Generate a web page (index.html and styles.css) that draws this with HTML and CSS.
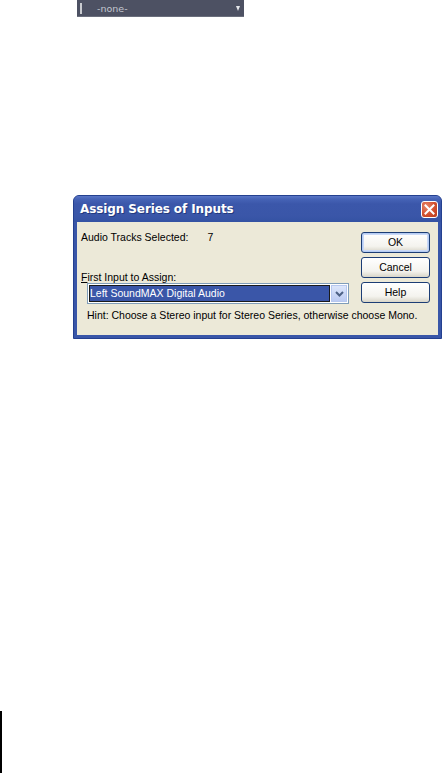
FILE: index.html
```html
<!DOCTYPE html>
<html>
<head>
<meta charset="utf-8">
<link rel="stylesheet" href="styles.css">
</head>
<body>
<div class="page">
  <div class="chan">
    <span class="grip"></span>
    <span class="chan-label">-none-</span>
    <span class="chan-arrow"></span>
  </div>

  <div class="dialog">
    <div class="titlebar">
      <span class="title">Assign Series of Inputs</span>
      <span class="close">
        <svg width="11" height="11" viewBox="0 0 11 11"><path d="M1.5 1.5 L9.5 9.5 M9.5 1.5 L1.5 9.5" stroke="#fff" stroke-width="2" stroke-linecap="square"/></svg>
      </span>
    </div>
    <div class="body">
      <div class="upper">
        <div class="main">
          <div class="tracks"><span>Audio Tracks Selected:</span><span class="count">7</span></div>
          <div class="lbl"><u>F</u>irst Input to Assign:</div>
          <div class="select">
            <span class="sel-text">Left SoundMAX Digital Audio</span>
            <span class="sel-btn">
              <svg width="9" height="6" viewBox="0 0 9 6"><path d="M1 1 L4.5 4.5 L8 1" fill="none" stroke="#4d6185" stroke-width="2"/></svg>
            </span>
          </div>
        </div>
        <div class="buttons">
          <div class="btn btn-default">OK</div>
          <div class="btn">Cancel</div>
          <div class="btn">Help</div>
        </div>
      </div>
      <div class="hint">Hint: Choose a Stereo input for Stereo Series, otherwise choose Mono.</div>
    </div>
  </div>

  <div class="edge"></div>
</div>
</body>
</html>
```
FILE: styles.css
```css
html, body {
  margin: 0;
  padding: 0;
  background: #ffffff;
}

.page {
  width: 443px;
  height: 773px;
  overflow: hidden;
}

/* top channel strip */
.chan {
  margin-left: 77px;
  width: 167px;
  height: 17px;
  background: #4d5163;
  border-bottom: 1px solid #6a6e7c;
  box-sizing: border-box;
  display: flex;
  align-items: center;
  padding: 0 3px 0 3px;
}
.grip {
  width: 2px;
  height: 11px;
  background: #c9cbd0;
}
.chan-label {
  margin-left: 15px;
  font-family: "DejaVu Sans", sans-serif;
  font-size: 9.5px;
  color: #c3c6cf;
  flex: 1;
}
.chan-arrow {
  width: 0;
  height: 0;
  border-left: 2.5px solid transparent;
  border-right: 2.5px solid transparent;
  border-top: 5px solid #e4e6ea;
  margin-right: 1px;
}

/* dialog */
.dialog {
  margin: 178px 0 0 73px;
  width: 369px;
  box-sizing: border-box;
  background: #3956a8;
  border: 1px solid #24408f;
  border-radius: 6px 6px 0 0;
  padding: 0 3px 3px 3px;
}
.titlebar {
  height: 26px;
  display: flex;
  align-items: center;
  justify-content: space-between;
  background: linear-gradient(#5a76c6 0px, #4663b6 3px, #3b57aa 8px, #3a56a8 20px, #3452a3 26px);
  margin: 0 -3px;
  padding-left: 6px;
  padding-right: 3px;
  border-radius: 5px 5px 0 0;
}
.title {
  font-family: "DejaVu Sans", sans-serif;
  font-weight: bold;
  font-size: 12px;
  color: #ffffff;
  letter-spacing: -0.1px;
  text-shadow: 1px 1px 0 #23397e;
}
.close {
  width: 15px;
  height: 15px;
  border: 1px solid #ffffff;
  border-radius: 3px;
  background: radial-gradient(circle at 30% 30%, #e8866a, #d2502f 55%, #b93a1c);
  display: flex;
  align-items: center;
  justify-content: center;
}
.close svg { display: block; }

.body {
  background: #ece9d8;
  padding: 9px 8px 13px 4px;
  font-family: "Liberation Sans", Arial, sans-serif;
  font-size: 10.5px;
  line-height: 13px;
  color: #000000;
  white-space: nowrap;
}
.upper {
  display: flex;
  justify-content: space-between;
}
.main {
  display: flex;
  flex-direction: column;
}
.tracks {
  display: flex;
}
.count {
  margin-left: 19px;
}
.lbl {
  margin-top: 27px;
  line-height: 12px;
}
.select {
  margin: 0 0 0 6px;
  width: 262px;
  height: 21px;
  box-sizing: border-box;
  border: 1px solid #7f9db9;
  background: #ffffff;
  padding: 1px;
  display: flex;
  gap: 1px;
}
.sel-text {
  flex: 1;
  background: #3a56a8;
  color: #ffffff;
  border: 1px dotted #e8a23a;
  outline: 1px solid #1a1a1a;
  outline-offset: -1px;
  line-height: 15px;
}
.sel-btn {
  width: 16px;
  background: linear-gradient(#dce6fb, #bccbf2);
  border: 1px solid #b7c8ef;
  box-sizing: border-box;
  display: flex;
  align-items: center;
  justify-content: center;
}
.sel-btn svg { display: block; }

.buttons {
  display: flex;
  flex-direction: column;
  gap: 4px;
  margin-top: 1px;
}
.btn {
  width: 69px;
  height: 21px;
  box-sizing: border-box;
  border: 1px solid #1c3d75;
  border-radius: 3px;
  background: linear-gradient(#ffffff, #f4f3ee 70%, #d8d5c8);
  display: flex;
  align-items: center;
  justify-content: center;
}
.btn-default {
  box-shadow: inset 0 0 0 1px #b5ccf3, inset 0 0 0 2px #cad9f7;
}

.hint {
  margin-top: 5px;
  padding-left: 6px;
}

/* left page edge line */
.edge {
  margin-top: 372px;
  width: 2px;
  height: 66px;
  background: #000000;
}
```
